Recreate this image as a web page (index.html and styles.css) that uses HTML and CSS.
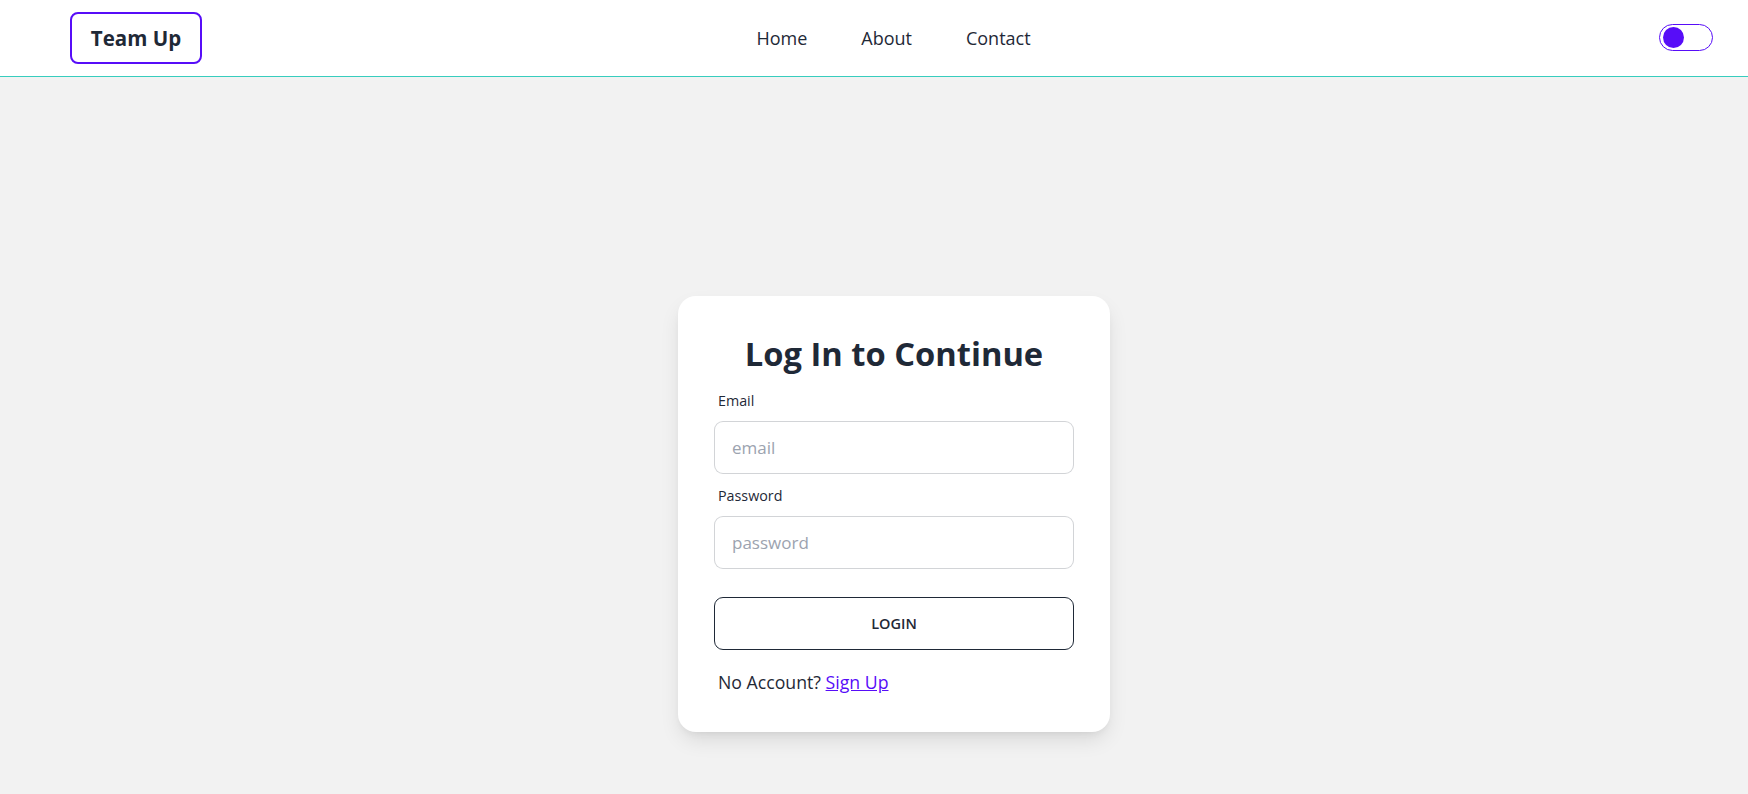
FILE: index.html
```html
<!DOCTYPE html>
<html lang="en">
<head>
<meta charset="utf-8">
<title>Team Up</title>
<link rel="stylesheet" href="styles.css">
</head>
<body>
<header class="navbar">
  <div class="nav-start">
    <a class="logo" href="#">Team Up</a>
  </div>
  <nav class="nav-center">
    <a href="#">Home</a>
    <a href="#">About</a>
    <a href="#">Contact</a>
  </nav>
  <div class="nav-end">
    <span class="toggle"><span class="knob"></span></span>
  </div>
</header>
<main class="main">
  <form class="card">
    <h1 class="title">Log In to Continue</h1>
    <label class="label" for="email">Email</label>
    <input class="input" id="email" type="email" placeholder="email">
    <label class="label" for="password">Password</label>
    <input class="input" id="password" type="password" placeholder="password">
    <button class="btn" type="button">Login</button>
    <p class="signup">No Account? <a href="#">Sign Up</a></p>
  </form>
</main>
</body>
</html>
```
FILE: styles.css
```css
* { box-sizing: border-box; }
html, body { margin: 0; padding: 0; }
body {
  font-family: "Open Sans", "Noto Sans", sans-serif;
  color: #1f2937;
  background: #f2f2f2;
  min-height: 794px;
}
a { color: inherit; text-decoration: none; }

.navbar {
  height: 77px;
  background: #fff;
  border-bottom: 1px solid #37cdbe;
  display: grid;
  grid-template-columns: 1fr auto 1fr;
  align-items: center;
  padding: 0 35px 0 70px;
}
.nav-start { display: flex; }
.logo {
  display: flex;
  align-items: center;
  justify-content: center;
  width: 132px;
  height: 52px;
  border: 2px solid #570df8;
  border-radius: 8px;
  font-size: 20.5px;
  font-weight: 700;
  margin-top: -1px;
}
.nav-center {
  display: flex;
  gap: 54px;
  padding-left: 4px;
  font-size: 18px;
}
.nav-end { display: flex; justify-content: flex-end; }
.toggle {
  width: 54px;
  height: 27px;
  border: 1px solid #570df8;
  border-radius: 14px;
  display: flex;
  align-items: center;
  padding-left: 3px;
  margin-top: -1px;
}
.knob {
  width: 21px;
  height: 21px;
  border-radius: 50%;
  background: #570df8;
}

.main {
  display: flex;
  justify-content: center;
  padding: 219px 0 62px 40px;
}
.card {
  width: 432px;
  background: #fff;
  border-radius: 18px;
  box-shadow: 0 10px 22px -4px rgba(0,0,0,0.12), 0 4px 8px -4px rgba(0,0,0,0.08);
  padding: 38px 36px 37px;
  display: flex;
  flex-direction: column;
}
.title {
  margin: 0;
  text-align: center;
  font-size: 32.7px;
  line-height: 40px;
  font-weight: 700;
}
.label {
  display: block;
  font-size: 14.3px;
  line-height: 20px;
  padding: 0 4px;
  margin-top: 17px;
}
.label + .input { margin-top: 10px; }
.input + .label { margin-top: 12px; }
.input {
  display: block;
  width: 100%;
  height: 53px;
  border: 1px solid rgba(31,41,55,0.2);
  border-radius: 9px;
  padding: 0 17px;
  font-family: inherit;
  font-size: 17px;
  color: #1f2937;
  background: #fff;
  outline: none;
}
.input::placeholder { color: #9ca3af; }
.btn {
  margin-top: 28px;
  height: 53px;
  width: 100%;
  border: 1px solid #1f2937;
  border-radius: 9px;
  background: #fff;
  font-family: inherit;
  font-size: 14.5px;
  font-weight: 600;
  text-transform: uppercase;
  color: #1f2937;
}
.signup {
  margin: 19px 0 0;
  padding: 0 4px;
  font-size: 17.7px;
  line-height: 26px;
}
.signup a {
  color: #570df8;
  text-decoration: underline;
}
```
